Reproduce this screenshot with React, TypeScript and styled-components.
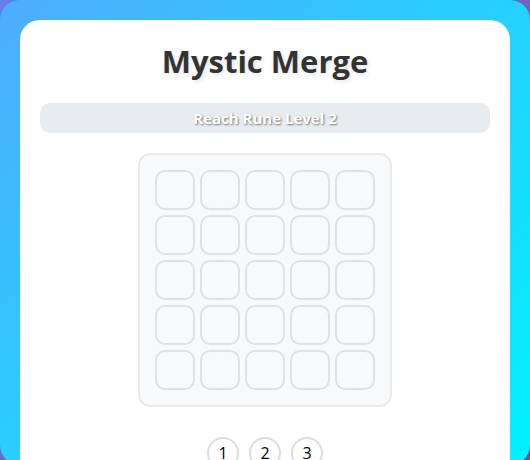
import React from "react";
import styled, { createGlobalStyle } from "styled-components";

const Global = createGlobalStyle`
  html, body { margin: 0; padding: 0; }
  body {
    background: linear-gradient(135deg, #667eea 0%, #764ba2 100%);
    font-family: "Open Sans", "Noto Sans", sans-serif;
    overflow: hidden;
  }
  * { box-sizing: border-box; }
`;

const Frame = styled.div`
  height: 465px;
  padding: 20px;
  border-radius: 20px;
  background: linear-gradient(135deg, #4facfe 0%, #00f2fe 100%);
`;

const Card = styled.div`
  background: #ffffff;
  border-radius: 20px;
  padding: 20px;
  display: flex;
  flex-direction: column;
  align-items: stretch;
  min-height: 500px;
`;

const Title = styled.h1`
  margin: 0 0 20px;
  text-align: center;
  font-size: 31px;
  line-height: 43px;
  font-weight: 700;
  color: #333333;
  text-shadow: 2px 2px 4px rgba(0, 0, 0, 0.1);
`;

const GoalBar = styled.div`
  position: relative;
  height: 30px;
  border-radius: 10px;
  background: #e9ecef;
  display: flex;
  align-items: center;
  justify-content: center;
  overflow: hidden;
  margin-bottom: 20px;
`;

const GoalFill = styled.div`
  position: absolute;
  left: 0;
  top: 0;
  bottom: 0;
  background: linear-gradient(90deg, #4facfe, #00f2fe);
`;

const GoalText = styled.span`
  position: relative;
  color: #ffffff;
  font-weight: 700;
  font-size: 15px;
  text-shadow: 1px 1px 2px rgba(0, 0, 0, 0.5);
`;

const Board = styled.div`
  align-self: center;
  display: grid;
  grid-template-columns: repeat(5, 40px);
  grid-auto-rows: 40px;
  gap: 5px;
  padding: 15px;
  background: #f8f9fa;
  border: 2px solid #e9ecef;
  border-radius: 12px;
  margin-bottom: 30px;
`;

const Cell = styled.div`
  border: 2px solid #dee2e6;
  border-radius: 10px;
  background: #f8f9fa;
`;

const Levels = styled.div`
  display: flex;
  justify-content: center;
  gap: 10px;
`;

const LevelButton = styled.button`
  width: 32px;
  height: 32px;
  border-radius: 50%;
  border: 2px solid #dddddd;
  background: #ffffff;
  color: #000000;
  font-family: "Open Sans", "Noto Sans", sans-serif;
  font-size: 16px;
  padding: 0;
  display: flex;
  align-items: center;
  justify-content: center;
  cursor: pointer;
`;

export default function App() {
  const progress = 0;
  const cells = Array.from({ length: 25 }, (_, i) => i);
  return (
    <>
      <Global />
      <Frame>
        <Card>
          <Title>Mystic Merge</Title>
          <GoalBar>
            <GoalFill style={{ width: `${progress}%` }} />
            <GoalText>Reach Rune Level 2</GoalText>
          </GoalBar>
          <Board>
            {cells.map((i) => (
              <Cell key={i} />
            ))}
          </Board>
          <Levels>
            {[1, 2, 3].map((n) => (
              <LevelButton key={n}>{n}</LevelButton>
            ))}
          </Levels>
        </Card>
      </Frame>
    </>
  );
}
